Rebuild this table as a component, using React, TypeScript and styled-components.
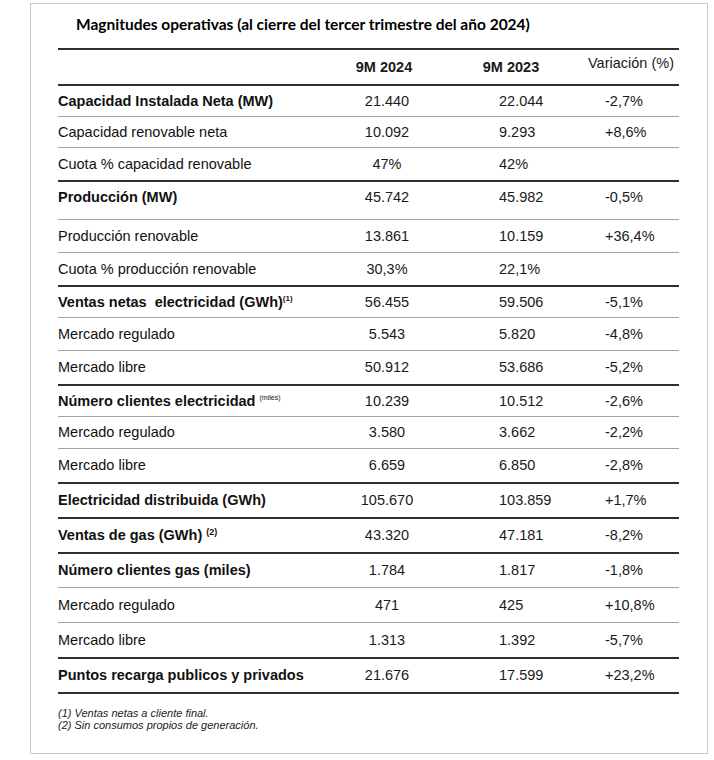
import React from 'react';
import styled, { createGlobalStyle } from 'styled-components';

const GlobalStyle = createGlobalStyle`
  html, body { margin: 0; padding: 0; background: #ffffff; }
  body { font-family: "Liberation Sans", Arial, sans-serif; color: #111111; }
`;

const Frame = styled.div`
  box-sizing: border-box;
  width: 678px;
  height: 751px;
  margin: 3px 0 0 30px;
  border: 1px solid #c9c9c9;
  padding: 0 28px 0 27px;
  display: flex;
  flex-direction: column;
`;

const Title = styled.h1`
  box-sizing: border-box;
  margin: 0;
  height: 44px;
  padding: 9px 0 0 18px;
  font-family: Lato, "Open Sans", sans-serif;
  font-weight: 700;
  font-size: 15.5px;
  line-height: 22px;
  color: #000000;
`;

const Table = styled.div`
  display: flex;
  flex-direction: column;
`;

type Rule = 'thick' | 'thin';

const Row = styled.div<{ $top: Rule; $h: number; $last?: boolean; $lift?: number }>`
  box-sizing: border-box;
  display: grid;
  grid-template-columns: 262px 121px 128px 110px;
  align-items: center;
  height: ${(p) => p.$h + (p.$last ? 2 : 0)}px;
  border-top: ${(p) => (p.$top === 'thick' ? '2px solid #2f2f2f' : '1px solid #a4a4a4')};
  border-bottom: ${(p) => (p.$last ? '2px solid #2f2f2f' : 'none')};
  padding-bottom: ${(p) => p.$lift ?? 0}px;
  font-size: 14.5px;
  line-height: 17px;
  white-space: nowrap;
`;

const Label = styled.div<{ $bold?: boolean }>`
  font-weight: ${(p) => (p.$bold ? 700 : 400)};
  color: #111111;
`;

const Cell = styled.div<{ $align: 'center' | 'left'; $pad: number; $bold?: boolean; $lift?: number }>`
  text-align: ${(p) => p.$align};
  padding-left: ${(p) => p.$pad}px;
  padding-bottom: ${(p) => p.$lift ?? 0}px;
  font-weight: ${(p) => (p.$bold ? 700 : 400)};
  color: #1a1a1a;
`;

const Sup = styled.sup<{ $size: number; $bold?: boolean }>`
  font-size: ${(p) => p.$size}px;
  font-weight: ${(p) => (p.$bold ? 700 : 400)};
  vertical-align: top;
  line-height: 1;
  position: relative;
  top: 1px;
`;

const Notes = styled.div`
  padding-top: 13px;
  font-style: italic;
  font-size: 11px;
  line-height: 12px;
  color: #222222;
`;

type RowData = {
  label: React.ReactNode;
  bold?: boolean;
  a: string;
  b: string;
  c: string;
  top: Rule;
  h: number;
  lift?: number;
};

const rows: RowData[] = [
  { label: 'Capacidad Instalada Neta (MW)', bold: true, a: '21.440', b: '22.044', c: '-2,7%', top: 'thick', h: 32 },
  { label: 'Capacidad renovable neta', a: '10.092', b: '9.293', c: '+8,6%', top: 'thin', h: 31 },
  { label: 'Cuota % capacidad renovable', a: '47%', b: '42%', c: '', top: 'thin', h: 33 },
  { label: 'Producción (MW)', bold: true, a: '45.742', b: '45.982', c: '-0,5%', top: 'thick', h: 39, lift: 7 },
  { label: 'Producción renovable', a: '13.861', b: '10.159', c: '+36,4%', top: 'thin', h: 33 },
  { label: 'Cuota % producción renovable', a: '30,3%', b: '22,1%', c: '', top: 'thin', h: 33 },
  {
    label: (
      <>
        Ventas netas&nbsp; electricidad (GWh)<Sup $size={8} $bold>(1)</Sup>
      </>
    ),
    bold: true,
    a: '56.455',
    b: '59.506',
    c: '-5,1%',
    top: 'thick',
    h: 32,
  },
  { label: 'Mercado regulado', a: '5.543', b: '5.820', c: '-4,8%', top: 'thin', h: 33 },
  { label: 'Mercado libre', a: '50.912', b: '53.686', c: '-5,2%', top: 'thin', h: 34 },
  {
    label: (
      <>
        Número clientes electricidad <Sup $size={7}>(miles)</Sup>
      </>
    ),
    bold: true,
    a: '10.239',
    b: '10.512',
    c: '-2,6%',
    top: 'thick',
    h: 32,
  },
  { label: 'Mercado regulado', a: '3.580', b: '3.662', c: '-2,2%', top: 'thin', h: 32 },
  { label: 'Mercado libre', a: '6.659', b: '6.850', c: '-2,8%', top: 'thin', h: 34 },
  { label: 'Electricidad distribuida (GWh)', bold: true, a: '105.670', b: '103.859', c: '+1,7%', top: 'thick', h: 35 },
  {
    label: (
      <>
        Ventas de gas (GWh) <Sup $size={9} $bold>(2)</Sup>
      </>
    ),
    bold: true,
    a: '43.320',
    b: '47.181',
    c: '-8,2%',
    top: 'thick',
    h: 35,
  },
  { label: 'Número clientes gas (miles)', bold: true, a: '1.784', b: '1.817', c: '-1,8%', top: 'thick', h: 35 },
  { label: 'Mercado regulado', a: '471', b: '425', c: '+10,8%', top: 'thin', h: 35 },
  { label: 'Mercado libre', a: '1.313', b: '1.392', c: '-5,7%', top: 'thin', h: 35 },
  { label: 'Puntos recarga publicos y privados', bold: true, a: '21.676', b: '17.599', c: '+23,2%', top: 'thick', h: 35 },
];

export default function App() {
  return (
    <>
      <GlobalStyle />
      <Frame>
        <Title>Magnitudes operativas (al cierre del tercer trimestre del año 2024)</Title>
        <Table>
          <Row $top="thick" $h={36}>
            <Label />
            <Cell $align="center" $pad={7} $bold>
              9M 2024
            </Cell>
            <Cell $align="center" $pad={12} $bold>
              9M 2023
            </Cell>
            <Cell $align="center" $pad={14} $lift={8}>
              Variación (%)
            </Cell>
          </Row>
          {rows.map((r, i) => (
            <Row key={i} $top={r.top} $h={r.h} $last={i === rows.length - 1} $lift={r.lift}>
              <Label $bold={r.bold}>{r.label}</Label>
              <Cell $align="center" $pad={13}>
                {r.a}
              </Cell>
              <Cell $align="left" $pad={58}>
                {r.b}
              </Cell>
              <Cell $align="left" $pad={36}>
                {r.c}
              </Cell>
            </Row>
          ))}
        </Table>
        <Notes>
          <div>(1) Ventas netas a cliente final.</div>
          <div>(2) Sin consumos propios de generación.</div>
        </Notes>
      </Frame>
    </>
  );
}
